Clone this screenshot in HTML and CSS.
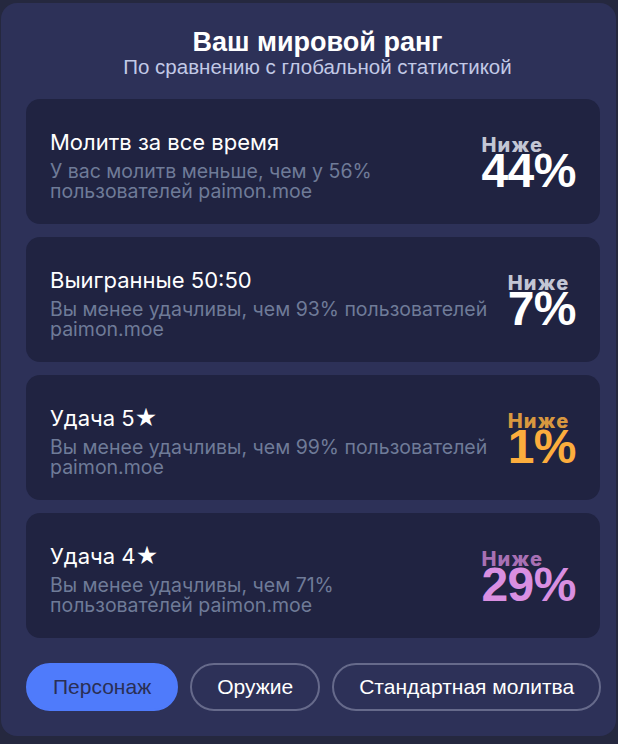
FILE: index.html
```html
<!DOCTYPE html>
<html lang="ru">
<head>
<meta charset="utf-8">
<link rel="stylesheet" href="styles.css">
</head>
<body>
<div class="panel">
  <div class="head">
    <h1 class="title">Ваш мировой ранг</h1>
    <div class="subtitle">По сравнению с глобальной статистикой</div>
  </div>
  <div class="list">
    <div class="card">
      <div class="info">
        <div class="name">Молитв за все время</div>
        <div class="desc">У вас молитв меньше, чем у 56%<br>пользователей paimon.moe</div>
      </div>
      <div class="rank">
        <div class="label">Ниже</div>
        <div class="pct">44%</div>
      </div>
    </div>
    <div class="card">
      <div class="info">
        <div class="name">Выигранные 50:50</div>
        <div class="desc">Вы менее удачливы, чем 93% пользователей<br>paimon.moe</div>
      </div>
      <div class="rank">
        <div class="label">Ниже</div>
        <div class="pct">7%</div>
      </div>
    </div>
    <div class="card">
      <div class="info">
        <div class="name">Удача 5★</div>
        <div class="desc">Вы менее удачливы, чем 99% пользователей<br>paimon.moe</div>
      </div>
      <div class="rank gold">
        <div class="label">Ниже</div>
        <div class="pct">1%</div>
      </div>
    </div>
    <div class="card">
      <div class="info">
        <div class="name">Удача 4★</div>
        <div class="desc">Вы менее удачливы, чем 71%<br>пользователей paimon.moe</div>
      </div>
      <div class="rank purple">
        <div class="label">Ниже</div>
        <div class="pct">29%</div>
      </div>
    </div>
  </div>
  <div class="tabs">
    <button class="tab active">Персонаж</button>
    <button class="tab">Оружие</button>
    <button class="tab">Стандартная молитва</button>
  </div>
</div>
</body>
</html>
```
FILE: styles.css
```css
html, body {
  margin: 0;
  padding: 0;
  background: #25283f;
}
body {
  padding: 3px 2px 8px 1px;
  font-family: "Liberation Sans", Arial, sans-serif;
}
.panel {
  background: #2d3158;
  border-radius: 16px;
  padding: 25px 16px 0 25px;
  height: 733px;
  box-sizing: border-box;
}
.head {
  text-align: center;
  margin-bottom: 21px;
  padding-left: 9px;
}
.title {
  margin: 0;
  color: #ffffff;
  font-size: 27px;
  font-weight: bold;
  line-height: 28px;
}
.subtitle {
  color: #c2c9e6;
  font-size: 20.5px;
  line-height: 22px;
}
.list {
  display: flex;
  flex-direction: column;
  gap: 13px;
}
.card {
  background: #202341;
  border-radius: 14px;
  height: 125px;
  box-sizing: border-box;
  padding: 0 24px;
  display: flex;
  align-items: center;
  justify-content: space-between;
}
.info {
  font-family: Inter, "Noto Sans", sans-serif;
  margin-top: 7px;
}
.name {
  color: #ffffff;
  font-size: 22px;
  line-height: 26px;
  margin-bottom: 6px;
}
.desc {
  color: #6f7b98;
  font-size: 19.5px;
  line-height: 20px;
}
.rank {
  color: #ffffff;
  flex: none;
  margin-top: 2px;
}
.label {
  font-family: Inter, "Noto Sans", sans-serif;
  font-weight: 800;
  color: #c3c6d4;
  font-size: 20px;
  line-height: 16px;
  letter-spacing: 1.2px;
}
.pct {
  font-family: "Liberation Sans", Arial, sans-serif;
  font-weight: bold;
  font-size: 48px;
  line-height: 36px;
  letter-spacing: -0.5px;
}
.gold { color: #fcad3d; }
.gold .label { color: #d8983f; }
.purple { color: #d98fe1; }
.purple .label { color: #a870b4; }
.tabs {
  display: flex;
  gap: 12px;
  margin-top: 25px;
}
.tab {
  font-family: "Liberation Sans", Arial, sans-serif;
  font-size: 21px;
  height: 48px;
  border-radius: 24px;
  background: transparent;
  border: 2px solid #666a8b;
  color: #ffffff;
  padding: 0 25px;
  white-space: nowrap;
}
.tab.active {
  background: #4f7bfb;
  border-color: #4f7bfb;
  color: #2a2f55;
}
```
